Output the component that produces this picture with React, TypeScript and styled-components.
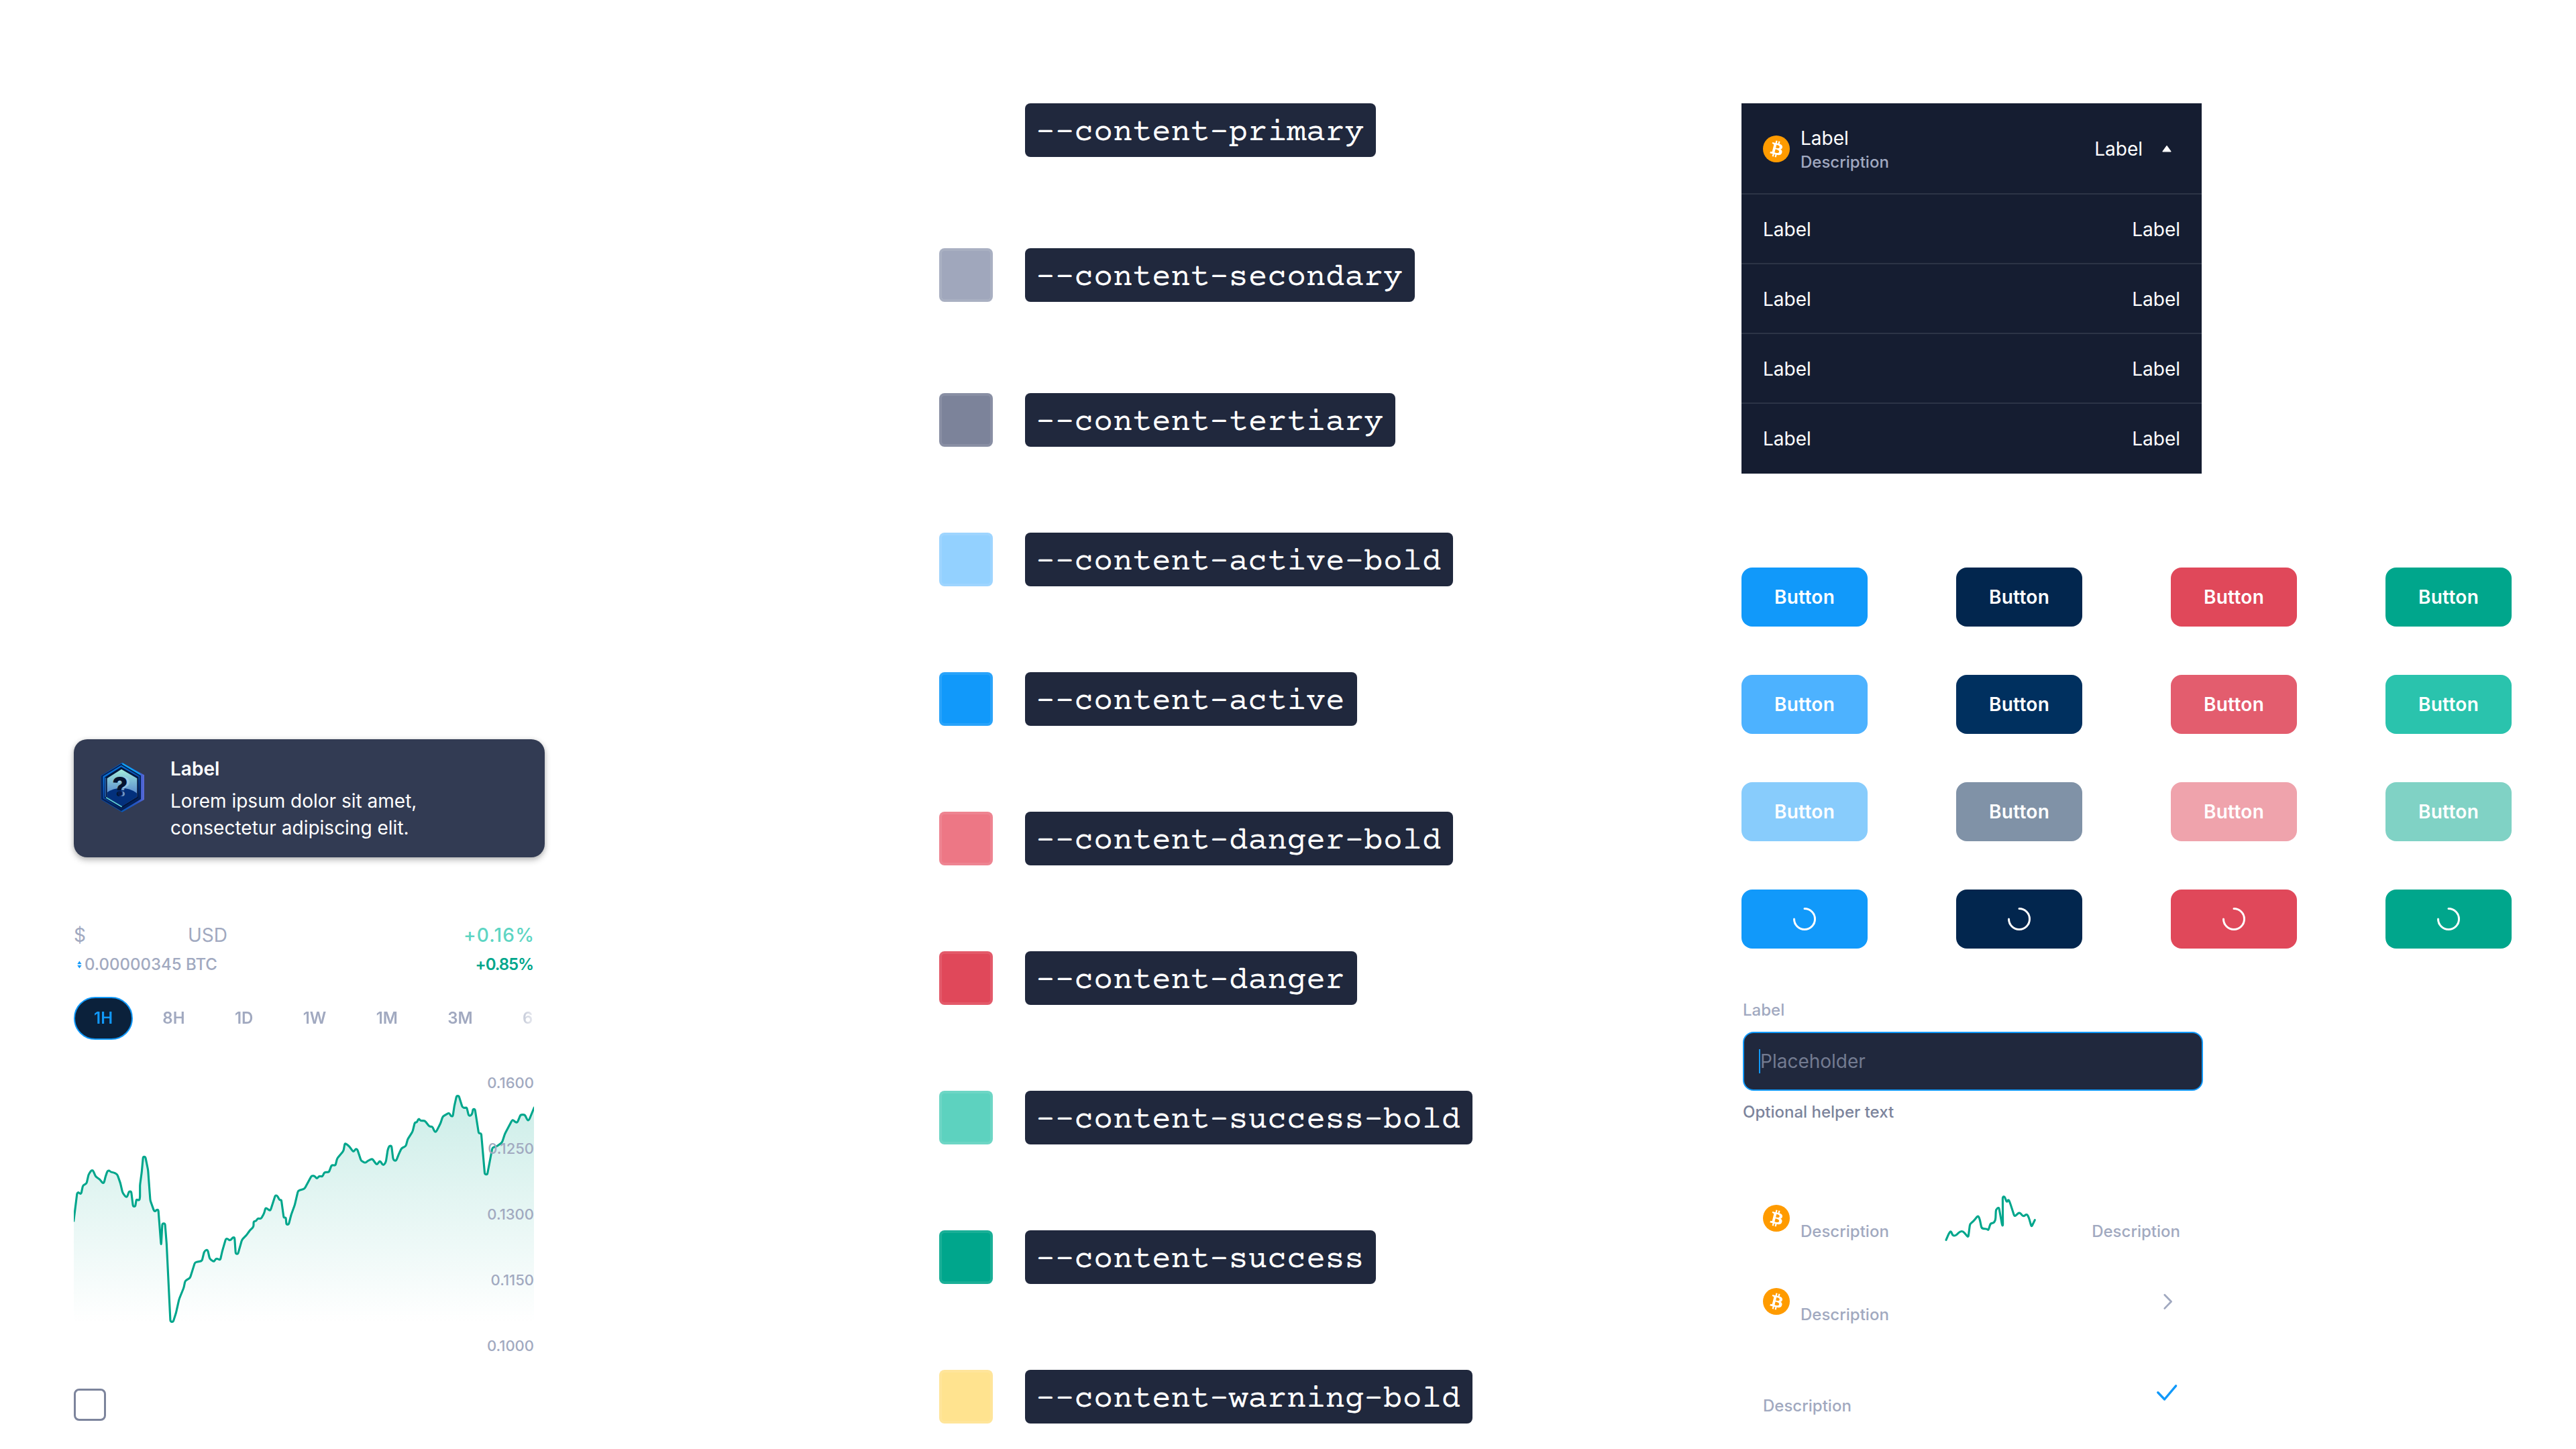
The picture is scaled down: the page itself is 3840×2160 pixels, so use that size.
import React from "react";
import styled, { createGlobalStyle } from "styled-components";

const GlobalStyle = createGlobalStyle`
  * { box-sizing: border-box; }
  body {
    margin: 0;
    background: #ffffff;
    font-family: Inter, "Liberation Sans", sans-serif;
    -webkit-font-smoothing: antialiased;
  }
`;

const color = {
  secondary: "#a1a9c0",
  tertiary: "#7c849c",
  active: "#1199fa",
  success: "#00a68c",
  successBold: "#5dd5c3",
  surface: "#151d31",
  field: "#20283d",
  divider: "#2c3446",
};

type Point = [number, number];

/* Joins the points with straight runs and rounds every corner. */
function roundedPath(points: Point[], radius: number): string {
  let d = `M${points[0][0]} ${points[0][1]}`;
  for (let i = 1; i < points.length - 1; i++) {
    const [px, py] = points[i - 1];
    const [x, y] = points[i];
    const [nx, ny] = points[i + 1];
    const a = Math.hypot(x - px, y - py);
    const b = Math.hypot(nx - x, ny - y);
    const ra = Math.min(radius, a / 2) / a;
    const rb = Math.min(radius, b / 2) / b;
    d += `L${(x + (px - x) * ra).toFixed(1)} ${(y + (py - y) * ra).toFixed(1)}`;
    d += `Q${x} ${y} ${(x + (nx - x) * rb).toFixed(1)} ${(y + (ny - y) * rb).toFixed(1)}`;
  }
  const last = points[points.length - 1];
  return `${d}L${last[0]} ${last[1]}`;
}

const pricesEarly: Point[] = [
  [17, 604], [33, 475], [39, 472], [46, 479], [51, 478], [59, 441], [75, 433], [84, 393], [96, 374], [104, 374],
  [116, 402], [134, 414], [147, 431], [153, 430], [159, 405], [168, 377], [176, 374], [184, 382], [195, 383],
  [212, 391], [226, 430], [236, 473], [250, 493], [257, 492], [265, 468], [275, 469], [283, 535], [293, 536],
  [298, 503], [311, 509], [314, 495], [314, 440], [322, 380], [328, 313], [338, 313], [350, 372], [360, 508],
  [377, 556], [383, 557], [388, 550], [396, 550], [408, 704], [409, 704], [414, 611], [426, 612], [433, 700], [450, 1050],
  [462, 1052], [475, 1012], [489, 950], [510, 898], [516, 868], [538, 855], [560, 785], [591, 779], [601, 738],
  [610, 729], [617, 731], [626, 770], [643, 782], [648, 778], [655, 767], [673, 775], [682, 735], [698, 680],
  [705, 679], [715, 687], [722, 683], [729, 674], [737, 674], [742, 747], [752, 748], [770, 684], [790, 664],
  [805, 643], [822, 626], [822, 602], [834, 601], [840, 588], [855, 591], [869, 566], [875, 543], [881, 543],
  [892, 553], [898, 552], [919, 486], [927, 486], [939, 508], [946, 505], [957, 586], [966, 584], [969, 616],
  [979, 616], [990, 573], [1006, 529], [1021, 465], [1050, 456],
];

const pricesLate: Point[] = [
  [42, 460], [48, 458], [57, 459], [65, 469], [70, 469], [77, 459], [92, 462], [101, 442], [121, 442], [133, 410],
  [150, 412], [158, 380], [186, 347], [192, 314], [198, 315], [213, 328], [228, 349], [233, 349], [241, 337],
  [248, 340], [265, 391], [284, 401], [295, 391], [315, 382], [333, 407], [338, 406], [347, 393], [352, 394],
  [361, 409], [368, 409], [376, 395], [384, 342], [391, 324], [401, 325], [408, 383], [414, 391], [422, 390],
  [434, 360], [446, 334], [465, 326], [473, 295], [495, 261], [505, 220], [515, 219], [520, 205], [525, 204],
  [530, 212], [550, 212], [571, 239], [583, 237], [594, 262], [601, 261], [620, 223], [630, 193], [655, 178],
  [660, 179], [667, 192], [675, 192], [682, 145], [692, 101], [702, 101], [718, 152], [729, 155], [737, 152],
  [746, 189], [754, 190], [762, 180], [765, 160], [774, 160], [791, 269], [802, 268], [818, 451], [829, 453],
  [852, 332], [870, 327], [895, 310], [908, 270], [940, 210], [945, 209], [957, 220], [964, 219], [978, 185],
  [997, 185], [1009, 210], [1016, 209], [1040, 150],
];

const prices: Point[] = [
  ...pricesEarly,
  ...pricesLate.map(([x, y]): Point => [x + 1038, y - 60]),
];

const sparkPoints: Point[] = [
  [63, 235], [77, 203], [85, 195], [92, 215], [104, 217], [126, 197], [139, 196], [162, 224], [170, 163], [185, 152],
  [206, 126], [213, 140], [222, 184], [246, 186], [252, 192], [262, 160], [276, 160], [284, 145], [286, 99],
  [299, 88], [314, 171], [317, 171], [316, 43], [324, 40], [335, 68], [342, 52], [350, 72], [369, 131], [391, 111],
  [409, 131], [424, 118], [433, 135], [445, 177], [460, 146],
];

/* ---------- page ---------- */

const Page = styled.main`
  display: grid;
  grid-template-columns: 1290px 1196px 1fr;
  width: 3840px;
  height: 2160px;
  padding-left: 110px;
  overflow: hidden;
`;

const Column = styled.section<{ $top: number }>`
  display: flex;
  flex-direction: column;
  align-items: flex-start;
  padding-top: ${(p) => p.$top}px;
`;

/* ---------- toast ---------- */

const Toast = styled.article`
  display: flex;
  width: 702px;
  height: 176px;
  padding: 24px 32px;
  border-radius: 20px;
  background: #323b53;
  color: #ffffff;
  box-shadow: 0 4px 10px rgba(0, 0, 0, 0.28), 0 0 6px rgba(0, 0, 0, 0.08);
`;

const ToastIcon = styled.svg`
  flex: none;
  width: 80px;
  height: 80px;
  margin: 6px 32px 0 0;
`;

const ToastText = styled.div`
  display: flex;
  flex-direction: column;
  gap: 8px;
  width: 440px;
  font-size: 28px;
  line-height: 40px;
`;

const ToastTitle = styled.strong`
  font-weight: 600;
`;

/* ---------- price panel ---------- */

const PricePanel = styled.div`
  display: flex;
  flex-direction: column;
  width: 686px;
  margin-top: 96px;
`;

const PriceRow = styled.div`
  display: flex;
  justify-content: space-between;
  font-size: 28px;
  line-height: 40px;
  color: ${color.secondary};
`;

const CurrencySign = styled.span`
  display: inline-block;
  width: 170px;
`;

const Change = styled.span<{ $tone: string; $spacing: number; $weight: number }>`
  margin-right: ${(p) => -p.$spacing}px;
  color: ${(p) => p.$tone};
  font-weight: ${(p) => p.$weight};
  letter-spacing: ${(p) => p.$spacing}px;
`;

const ConvertedRow = styled(PriceRow)`
  margin-top: 8px;
  font-size: 24px;
  line-height: 32px;
  font-weight: 500;
`;

const Converted = styled.span`
  display: flex;
  align-items: center;
`;

const SwapIcon = styled.svg`
  width: 16px;
  height: 16px;
`;

const Tabs = styled.nav`
  display: flex;
  gap: 14.3px;
  margin-top: 32px;
  overflow: hidden;
  mask-image: linear-gradient(to right, #000 654px, transparent 694px);
`;

const Tab = styled.span<{ $active?: boolean }>`
  flex: none;
  height: 64px;
  padding: 0 28px;
  border: 2px solid ${(p) => (p.$active ? color.active : "transparent")};
  border-radius: 32px;
  background: ${(p) => (p.$active ? "#0b213b" : "transparent")};
  color: ${(p) => (p.$active ? color.active : color.secondary)};
  font-size: 24px;
  font-weight: 600;
  line-height: 60px;
`;

const ChartArea = styled.div`
  display: grid;
  width: 686px;
  height: 424px;
  margin-top: 48px;

  & > * {
    grid-area: 1 / 1;
  }
`;

const ChartDrawing = styled.svg`
  width: 686px;
  height: 424px;
`;

const Scale = styled.div`
  display: flex;
  flex-direction: column;
  justify-content: space-between;
  z-index: 1;
  text-align: right;
  font-size: 22px;
  font-weight: 500;
  line-height: 32px;
  color: ${color.secondary};
`;

const Checkbox = styled.div`
  width: 48px;
  height: 48px;
  margin-top: 48px;
  border: 3px solid ${color.tertiary};
  border-radius: 8px;
`;

/* ---------- tokens ---------- */

const TokenRow = styled.div<{ $after: number }>`
  display: flex;
  gap: 48px;
  height: 80px;
  margin-bottom: ${(p) => p.$after}px;
`;

const Swatch = styled.div<{ $fill: string }>`
  width: 80px;
  height: 80px;
  border: 4px solid rgba(255, 255, 255, 0.1);
  border-radius: 8px;
  background: ${(p) => p.$fill};
`;

const Token = styled.code`
  height: 80px;
  padding: 0 18px 0 16px;
  border-radius: 8px;
  background: ${color.field};
  color: #ffffff;
  font-family: "Courier Prime", "Nimbus Mono PS", "Courier New", "Liberation Mono", monospace;
  font-size: 48px;
  line-height: 89px;
  white-space: nowrap;
`;

/* ---------- table ---------- */

const Table = styled.div`
  width: 686px;
  background: ${color.surface};
  color: #ffffff;
  font-size: 28px;
  line-height: 40px;
`;

const TableRow = styled.div<{ $height: number }>`
  display: flex;
  align-items: center;
  height: ${(p) => p.$height}px;
  padding: 0 32px;

  &:not(:last-child) {
    box-shadow: inset 0 -2px ${color.divider};
  }
`;

const Stack = styled.div`
  display: flex;
  flex-direction: column;
`;

const Spacer = styled.div`
  flex: 1;
`;

const HeaderValue = styled.span`
  margin-right: 16px;
`;

const Coin = styled.svg`
  flex: none;
  width: 40px;
  height: 40px;
  margin-right: 16px;
`;

const Description = styled.span`
  font-size: 24px;
  font-weight: 500;
  line-height: 32px;
  color: ${color.secondary};
`;

const TrailingIcon = styled.svg`
  width: 40px;
  height: 40px;
`;

/* ---------- buttons ---------- */

const ButtonGrid = styled.div`
  display: grid;
  grid-template-columns: repeat(4, 188px);
  gap: 72px 132px;
  margin-top: 140px;
`;

const Button = styled.button<{ $fill: string }>`
  display: flex;
  align-items: center;
  justify-content: center;
  height: 88px;
  padding: 0;
  border: 0;
  border-radius: 16px;
  background: ${(p) => p.$fill};
  color: #ffffff;
  font: 600 28px/40px Inter, "Liberation Sans", sans-serif;
  letter-spacing: 0.3px;
`;

/* ---------- field ---------- */

const Field = styled.div`
  display: flex;
  flex-direction: column;
  gap: 16px;
  width: 688px;
  margin-top: 76px;
  padding-left: 2px;
`;

const Caption = styled.span<{ $tone: string }>`
  font-size: 24px;
  font-weight: 500;
  line-height: 32px;
  color: ${(p) => p.$tone};
`;

const InputBox = styled.div`
  display: flex;
  align-items: center;
  height: 88px;
  padding: 0 22px;
  border: 2px solid ${color.active};
  border-radius: 16px;
  background: ${color.field};
`;

const Caret = styled.i`
  width: 2px;
  height: 36px;
  background: ${color.active};
`;

const Placeholder = styled.span`
  font-size: 28px;
  line-height: 40px;
  color: #737b91;
`;

/* ---------- list ---------- */

const List = styled.div`
  width: 686px;
  margin-top: 80px;
`;

const ListRow = styled.div<{ $before?: number }>`
  display: flex;
  align-items: center;
  height: 124px;
  margin-top: ${(p) => p.$before ?? 0}px;
  padding: 0 32px;
`;

const LowerDescription = styled(Description)`
  padding-top: 40px;
`;

const Sparkline = styled.svg`
  width: 180px;
  height: 100px;
  margin: 8px 0 0 64px;
`;

/* ---------- drawings ---------- */

function BitcoinIcon() {
  return (
    <Coin viewBox="0 0 32 32">
      <circle cx="16" cy="16" r="16" fill="#ff9b00" />
      <path
        fill="#ffffff"
        d="M23.189 14.02c.314-2.096-1.283-3.223-3.465-3.975l.708-2.84-1.728-.43-.69 2.765c-.454-.114-.92-.22-1.385-.326l.695-2.783L15.596 6l-.708 2.839c-.376-.086-.746-.17-1.104-.26l.002-.009-2.384-.595-.46 1.846s1.283.294 1.256.312c.7.175.826.638.805 1.006l-.806 3.235c.048.012.11.03.18.057l-.183-.045-1.13 4.532c-.086.212-.303.531-.793.41.018.025-1.256-.313-1.256-.313l-.858 1.978 2.25.561c.418.105.828.215 1.231.318l-.715 2.872 1.727.43.708-2.84c.472.127.93.245 1.378.357l-.706 2.828 1.728.43.715-2.866c2.948.558 5.164.333 6.097-2.333.752-2.146-.037-3.385-1.588-4.192 1.13-.26 1.98-1.003 2.207-2.538zm-3.95 5.538c-.533 2.147-4.148.986-5.32.695l.95-3.805c1.172.293 4.929.872 4.37 3.11zm.535-5.569c-.487 1.953-3.495.96-4.47.717l.86-3.45c.975.243 4.118.696 3.61 2.733z"
      />
    </Coin>
  );
}

function Spinner() {
  return (
    <TrailingIcon viewBox="0 0 40 40" fill="none">
      <path d="M20 4.5A15.5 15.5 0 1 1 4.5 20" stroke="#ffffff" strokeWidth="3" strokeLinecap="round" />
    </TrailingIcon>
  );
}

function UnknownBadge() {
  return (
    <ToastIcon viewBox="36 36 240 240">
      <defs>
        <linearGradient id="rim" x1="0" y1="0" x2="1" y2="0">
          <stop offset="0" stopColor="#0d3f8f" />
          <stop offset="0.5" stopColor="#0a58b8" />
          <stop offset="0.85" stopColor="#2b55c4" />
          <stop offset="1" stopColor="#5a6ad8" />
        </linearGradient>
        <linearGradient id="band" x1="0" y1="0" x2="0.4" y2="1">
          <stop offset="0" stopColor="#0c86e8" />
          <stop offset="0.5" stopColor="#0a4fb0" />
          <stop offset="1" stopColor="#02215e" />
        </linearGradient>
        <linearGradient id="sky" x1="0" y1="0" x2="0" y2="1">
          <stop offset="0" stopColor="#a4eedd" />
          <stop offset="0.3" stopColor="#7fbfd6" />
          <stop offset="0.62" stopColor="#5f92cf" />
          <stop offset="1" stopColor="#2a5cb4" />
        </linearGradient>
        <clipPath id="window">
          <path d="M153 80L223 121V203L155 245L89 204V121Z" />
        </clipPath>
      </defs>
      <path d="M156 50L255 106V216L156 272L61 216V108Z" fill="url(#rim)" />
      <path d="M158 52L236 98L240 110L156 61Z" fill="#12a4f4" />
      <path d="M152 56L240 108V214L152 267L64 214V110Z" fill="#041f52" />
      <path d="M152 62L235 111V211L152 260L70 211V112Z" fill="url(#band)" />
      <path d="M152 70L229 115V208L153 254L78 208V116Z" fill="#03173f" />
      <path d="M153 80L223 121V203L155 245L89 204V121Z" fill="url(#sky)" />
      <g clipPath="url(#window)">
        <ellipse cx="153" cy="235" rx="92" ry="71" fill="#03307c" />
      </g>
      <path d="M82 204V118" stroke="#3f86d8" strokeWidth="3" />
      <path d="M84 206L155 248" stroke="#5fd0dc" strokeWidth="5" />
      <text
        x="147"
        y="200"
        textAnchor="middle"
        fontFamily="Inter, sans-serif"
        fontSize="121"
        fontWeight="800"
        fill="#04122f"
        style={{ textShadow: "4px 0 0 rgba(166, 208, 238, 0.7)" }}
      >
        ?
      </text>
      <circle cx="149" cy="189" r="11" fill="#123f96" />
      <circle cx="146" cy="188" r="10" fill="#061c50" />
    </ToastIcon>
  );
}

function PriceChart() {
  const line = roundedPath(prices, 7);
  return (
    <ChartDrawing viewBox="18 -66 2058 1272">
      <defs>
        <linearGradient id="area" gradientUnits="userSpaceOnUse" x1="0" y1="40" x2="0" y2="1056">
          <stop offset="0" stopColor={color.success} stopOpacity="0.2" />
          <stop offset="1" stopColor={color.success} stopOpacity="0" />
        </linearGradient>
      </defs>
      <path d={`${line}V1060H17Z`} fill="url(#area)" />
      <path d={line} fill="none" stroke={color.success} strokeWidth="9.4" strokeLinejoin="round" />
    </ChartDrawing>
  );
}

/* ---------- data ---------- */

const tokens = [
  { name: "--content-primary", fill: "#ffffff", after: 136 },
  { name: "--content-secondary", fill: "#a0a7bc", after: 136 },
  { name: "--content-tertiary", fill: "#7c839a", after: 128 },
  { name: "--content-active-bold", fill: "#93d1ff", after: 128 },
  { name: "--content-active", fill: "#1199fa", after: 128 },
  { name: "--content-danger-bold", fill: "#ed7785", after: 128 },
  { name: "--content-danger", fill: "#e0485a", after: 128 },
  { name: "--content-success-bold", fill: "#5dd2bf", after: 128 },
  { name: "--content-success", fill: "#00a68c", after: 128 },
  { name: "--content-warning-bold", fill: "#ffe38f", after: 0 },
];

const buttonRows = [
  ["#1199fa", "#02264e", "#e0485a", "#00a68c"],
  ["#4db2ff", "#00305f", "#e35d6e", "#2ac3ad"],
  ["#88ccfc", "#8092a7", "#efa3ac", "#80d2c5"],
];

const scale = ["0.1600", "0.1250", "0.1300", "0.1150", "0.1000"];
const ranges = ["1H", "8H", "1D", "1W", "1M", "3M", "6M"];

export default function App() {
  return (
    <>
      <GlobalStyle />
      <Page>
        <Column $top={1102}>
          <Toast>
            <UnknownBadge />
            <ToastText>
              <ToastTitle>Label</ToastTitle>
              <span>Lorem ipsum dolor sit amet, consectetur adipiscing elit.</span>
            </ToastText>
          </Toast>
          <PricePanel>
            <PriceRow>
              <span>
                <CurrencySign>$</CurrencySign>USD
              </span>
              <Change $tone={color.successBold} $spacing={1.2} $weight={500}>+0.16%</Change>
            </PriceRow>
            <ConvertedRow>
              <Converted>
                <SwapIcon viewBox="0 0 16 16" fill={color.active}>
                  <path d="M8.4 2.6L11.6 7.2H5.2Z" />
                  <path d="M8.4 13.6L11.6 9H5.2Z" />
                </SwapIcon>
                0.00000345 BTC
              </Converted>
              <Change $tone={color.success} $spacing={-1.1} $weight={600}>+0.85%</Change>
            </ConvertedRow>
            <Tabs>
              {ranges.map((r, i) => (
                <Tab key={r} $active={i === 0}>{r}</Tab>
              ))}
            </Tabs>
            <ChartArea>
              <PriceChart />
              <Scale>
                {scale.map((s) => (
                  <span key={s}>{s}</span>
                ))}
              </Scale>
            </ChartArea>
          </PricePanel>
          <Checkbox />
        </Column>

        <Column $top={154}>
          {tokens.map((t) => (
            <TokenRow key={t.name} $after={t.after}>
              <Swatch $fill={t.fill} />
              <Token>{t.name}</Token>
            </TokenRow>
          ))}
        </Column>

        <Column $top={154}>
          <Table>
            <TableRow $height={136}>
              <BitcoinIcon />
              <Stack>
                <span>Label</span>
                <Description>Description</Description>
              </Stack>
              <Spacer />
              <HeaderValue>Label</HeaderValue>
              <TrailingIcon viewBox="0 0 40 40">
                <path d="M20 15.6L26 23.8H14Z" fill="#ffffff" stroke="#ffffff" strokeWidth="1.2" strokeLinejoin="round" />
              </TrailingIcon>
            </TableRow>
            {[0, 1, 2, 3].map((i) => (
              <TableRow key={i} $height={104}>
                <span>Label</span>
                <Spacer />
                <span>Label</span>
              </TableRow>
            ))}
          </Table>

          <ButtonGrid>
            {buttonRows.flat().map((fill) => (
              <Button key={fill} $fill={fill}>Button</Button>
            ))}
            {buttonRows[0].map((fill) => (
              <Button key={`${fill}-busy`} $fill={fill}>
                <Spinner />
              </Button>
            ))}
          </ButtonGrid>

          <Field>
            <Caption $tone={color.secondary}>Label</Caption>
            <InputBox>
              <Caret />
              <Placeholder>Placeholder</Placeholder>
            </InputBox>
            <Caption $tone={color.tertiary}>Optional helper text</Caption>
          </Field>

          <List>
            <ListRow>
              <BitcoinIcon />
              <LowerDescription>Description</LowerDescription>
              <Sparkline viewBox="0 0 540 300" fill="none">
                <path
                  d={roundedPath(sparkPoints, 9)}
                  stroke={color.success}
                  strokeWidth="9.4"
                  strokeLinecap="round"
                  strokeLinejoin="round"
                />
              </Sparkline>
              <Spacer />
              <LowerDescription>Description</LowerDescription>
            </ListRow>
            <ListRow>
              <BitcoinIcon />
              <LowerDescription>Description</LowerDescription>
              <Spacer />
              <TrailingIcon viewBox="0 0 40 40" fill="none">
                <path d="M16.8 10.2L26.6 20.2L16.8 30.4" stroke={color.secondary} strokeWidth="2.8" strokeLinecap="round" strokeLinejoin="round" />
              </TrailingIcon>
            </ListRow>
            <ListRow $before={12}>
              <LowerDescription>Description</LowerDescription>
              <Spacer />
              <TrailingIcon viewBox="0 0 40 40" fill="none">
                <path d="M6.8 19.8L16.6 30L33.6 9.8" stroke={color.active} strokeWidth="3.4" strokeLinecap="round" strokeLinejoin="round" />
              </TrailingIcon>
            </ListRow>
          </List>
        </Column>
      </Page>
    </>
  );
}
